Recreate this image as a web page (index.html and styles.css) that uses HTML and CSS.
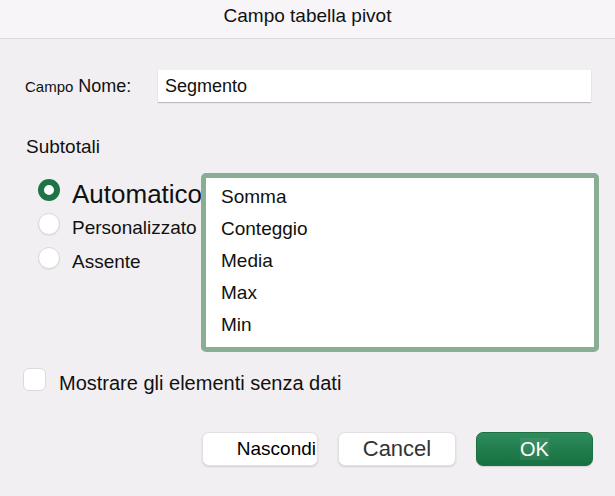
FILE: index.html
```html
<!DOCTYPE html>
<html lang="it">
<head>
<meta charset="utf-8">
<title>Campo tabella pivot</title>
<link rel="stylesheet" href="styles.css">
</head>
<body>
<div class="dialog">
  <header class="titlebar">Campo tabella pivot</header>

  <div class="name-row">
    <div class="labels">
      <span class="lbl-small">Campo</span>
      <span class="lbl-name">Nome:</span>
    </div>
    <div class="text-input">Segmento</div>
  </div>

  <div class="section-title">Subtotali</div>

  <div class="options">
    <div class="radios">
      <div class="radio-row big">
        <span class="radio checked"></span>
        <span class="radio-label">Automatico</span>
      </div>
      <div class="radio-row">
        <span class="radio"></span>
        <span class="radio-label">Personalizzato</span>
      </div>
      <div class="radio-row">
        <span class="radio"></span>
        <span class="radio-label">Assente</span>
      </div>
    </div>
    <div class="listbox">
      <div class="list-item">Somma</div>
      <div class="list-item">Conteggio</div>
      <div class="list-item">Media</div>
      <div class="list-item">Max</div>
      <div class="list-item">Min</div>
    </div>
  </div>

  <div class="check-row">
    <span class="checkbox"></span>
    <span class="check-label">Mostrare gli elementi senza dati</span>
  </div>

  <div class="buttons">
    <div class="btn btn-hide">Nascondi</div>
    <div class="btn btn-cancel">Cancel</div>
    <div class="btn btn-ok"><span class="ok-text">OK</span></div>
  </div>
</div>
</body>
</html>
```
FILE: styles.css
```css
html, body {
  margin: 0;
  padding: 0;
}
body {
  width: 615px;
  height: 496px;
  overflow: hidden;
  background: #f1eff2;
  font-family: "Liberation Sans", Arial, sans-serif;
  color: #111;
}
.dialog {
  width: 615px;
  height: 496px;
  display: flex;
  flex-direction: column;
}
.titlebar {
  height: 38px;
  box-sizing: content-box;
  background: #f8f5f9;
  border-bottom: 1px solid #dcdadd;
  font-size: 19px;
  line-height: 31px;
  text-align: center;
  color: #111;
}

/* Name row */
.name-row {
  margin-top: 31px;
  height: 32px;
  display: flex;
  padding-left: 25px;
  padding-right: 24px;
}
.labels {
  width: 133px;
  display: flex;
  align-items: baseline;
  line-height: 32px;
}
.lbl-small {
  font-size: 15px;
  margin-right: 5px;
}
.lbl-name {
  font-size: 18px;
}
.text-input {
  flex: 1;
  height: 32px;
  background: #fff;
  box-shadow: 0 1px 1px rgba(0, 0, 0, 0.22);
  font-size: 18px;
  line-height: 32px;
  padding-left: 7px;
}

.section-title {
  margin-top: 34px;
  padding-left: 26px;
  font-size: 19px;
  line-height: 22px;
}

/* Options */
.options {
  margin-top: 15px;
  display: flex;
  padding-left: 38px;
  height: 179px;
}
.radios {
  width: 163px;
  padding-top: 6px;
  display: flex;
  flex-direction: column;
  gap: 4px;
  white-space: nowrap;
}
.radio-row {
  display: flex;
  align-items: flex-start;
  height: 30px;
}
.radio-label {
  font-size: 19px;
  line-height: 30px;
  margin-left: 12px;
}
.big .radio-label {
  font-size: 26px;
}
.radio {
  flex: none;
  width: 22px;
  height: 22px;
  box-sizing: border-box;
  border-radius: 50%;
  background: #fff;
  border: 1px solid #d9d7da;
  box-shadow: 0 1px 1px rgba(0, 0, 0, 0.06);
}
.radio.checked {
  border: 6px solid #1f7446;
  box-shadow: none;
}
.listbox {
  position: relative;
  width: 398px;
  height: 179px;
  box-sizing: border-box;
  border: 5px solid #8aae93;
  border-radius: 5px;
  background: #fff;
  padding-top: 3px;
  padding-left: 15px;
}
.list-item {
  font-size: 19px;
  line-height: 32px;
}

/* Checkbox */
.check-row {
  margin-top: 16px;
  display: flex;
  align-items: flex-start;
  padding-left: 23px;
}
.checkbox {
  flex: none;
  width: 23px;
  height: 23px;
  box-sizing: border-box;
  background: #fff;
  border: 1px solid #dcdadd;
  border-radius: 6px;
}
.check-label {
  margin-left: 13px;
  font-size: 20px;
  line-height: 31px;
}

/* Buttons */
.buttons {
  margin-top: 33px;
  display: flex;
  justify-content: flex-end;
  gap: 20px;
  padding-right: 22px;
}
.btn {
  height: 34px;
  box-sizing: border-box;
  border-radius: 7px;
  background: #fff;
  border: 1px solid #e2e0e3;
  box-shadow: 0 1px 2px rgba(0, 0, 0, 0.14);
  line-height: 32px;
  text-align: center;
  white-space: nowrap;
}
.btn-hide {
  width: 116px;
  font-size: 19px;
  text-align: right;
  padding-right: 1px;
  color: #000;
}
.btn-cancel {
  width: 118px;
  font-size: 22px;
  color: #333;
}
.btn-ok {
  width: 117px;
  font-size: 20px;
  color: #fff;
  border: 1px solid #1c7042;
  background: linear-gradient(#2e8c5d, #17703f);
  box-shadow: 0 1px 1px rgba(0, 0, 0, 0.12);
}
.ok-text {
  background: rgba(255, 255, 255, 0.07);
}
```
